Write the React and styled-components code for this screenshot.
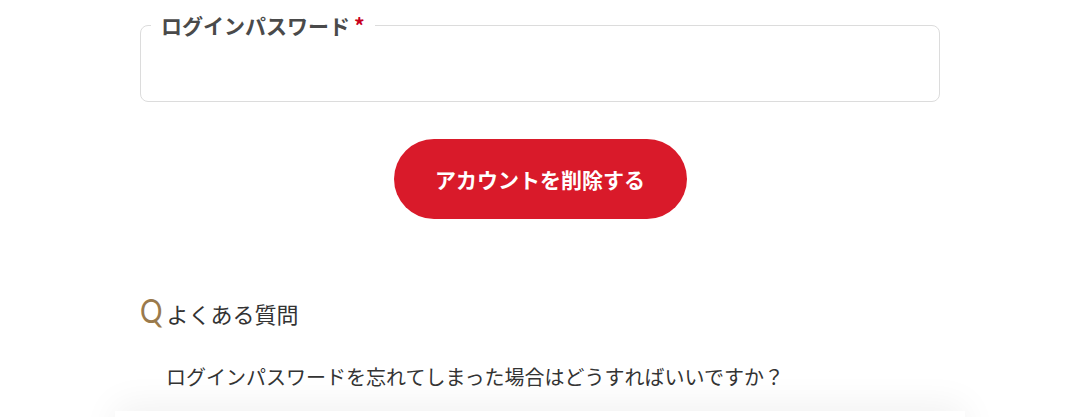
import styled, { createGlobalStyle } from 'styled-components';

const GlobalStyle = createGlobalStyle`
    body {
        margin: 0;
        background: #fff;
        font-family: "Noto Sans CJK JP", "Noto Sans", sans-serif;
        color: #333;
    }
`

const Page = styled.div`
    width: 850px;
    margin-left: 115px;
    padding-top: 11px;
`

const Inner = styled.div`
    padding: 0 25px;
`

const Field = styled.fieldset`
    margin: 0;
    padding: 0 10px;
    height: 89px;
    border: 1px solid #dcdcdc;
    border-radius: 8px;
`

const Legend = styled.legend`
    padding: 0 10px;
    font-size: 21px;
    font-weight: 700;
    line-height: 28px;
    color: #4a4a4a;
`

const Required = styled.span`
    color: #c8001e;
    margin-left: 4px;
`

const Input = styled.input`
    width: 100%;
    height: 100%;
    border: none;
    outline: none;
    background: transparent;
    font: inherit;
`

const Actions = styled.div`
    display: flex;
    justify-content: center;
    margin-top: 37px;
`

const DeleteButton = styled.button`
    width: 293px;
    height: 80px;
    border: none;
    border-radius: 40px;
    background-color: #d91a2a;
    color: #fff;
    font-family: inherit;
    font-size: 21px;
    font-weight: 700;
    cursor: pointer;
`

const Heading = styled.h2`
    display: flex;
    align-items: baseline;
    gap: 3px;
    margin: 71px 0 0;
    font-size: 22px;
    font-weight: 400;
    line-height: 40px;
    color: #333;
`

const QMark = styled.span`
    font-family: "Lato", "Noto Sans", sans-serif;
    font-size: 33px;
    color: #9a7a4c;
    display: inline-block;
    transform: scaleX(0.85);
    transform-origin: left;
    margin-right: -3px;
`

const Question = styled.p`
    margin: 29px 0 0;
    padding-left: 26px;
    font-size: 20px;
    line-height: 30px;
    color: #333;
`

const AnswerCard = styled.div`
    height: 60px;
    margin-top: 19px;
    background: #fff;
    box-shadow: 0 -6px 36px rgba(0, 0, 0, 0.06);
`

export default function App() {
    return (
        <>
            <GlobalStyle />
            <Page>
                <Inner>
                    <Field>
                        <Legend>ログインパスワード<Required>*</Required></Legend>
                        <Input type="password" />
                    </Field>
                    <Actions>
                        <DeleteButton>アカウントを削除する</DeleteButton>
                    </Actions>
                    <Heading><QMark>Q</QMark>よくある質問</Heading>
                    <Question>ログインパスワードを忘れてしまった場合はどうすればいいですか？</Question>
                </Inner>
                <AnswerCard />
            </Page>
        </>
    )
}
